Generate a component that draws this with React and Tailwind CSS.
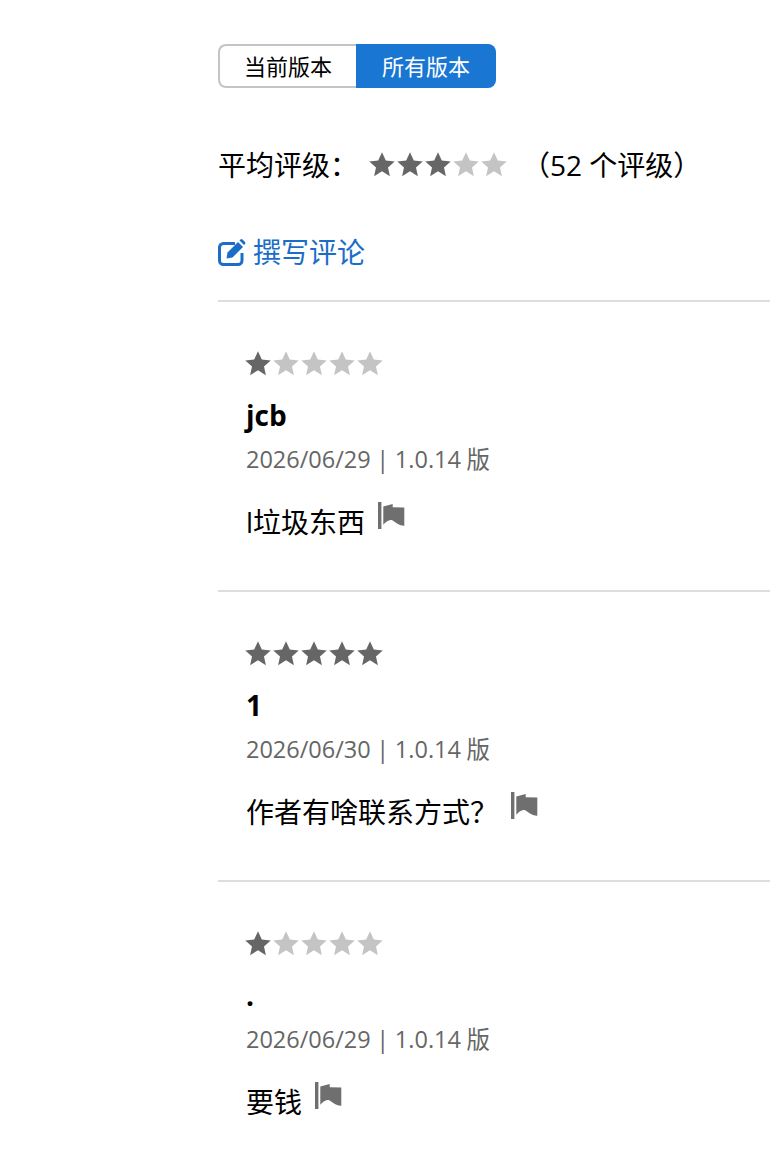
const FONT = "font-['Open_Sans','Noto_Sans_CJK_SC',sans-serif]";

function Star({ filled, size = 28 }) {
  return (
    <svg viewBox="0 0 28 28" width={size} height={size} className="block shrink-0">
      <path
        d="M14 1.200l3.800 8.200 8.900 1-6.700 6 1.900 8.800L14 20.300l-7.900 4.900 1.900-8.800-6.700-6 8.900-1z"
        fill={filled ? "#666666" : "#c4c4c4"}
      />
    </svg>
  );
}

function Stars({ n, className = "" }) {
  return (
    <div className={`flex ${className}`}>
      {[0, 1, 2, 3, 4].map((i) => (
        <Star key={i} filled={i < n} />
      ))}
    </div>
  );
}

function Flag({ className }) {
  return (
    <svg viewBox="0 0 28 28" width="28" height="28" className={className}>
      <path d="M0 0h3.400v27H0z" fill="#6f6f6f" />
      <path d="M5.300 4.500 14.700 2v3.300l11.600.3v18.100c-4.300.3-8.300-2.700-11.600-5.200-3.700-1.500-6.700 1.500-9.400 4.200z" fill="#6f6f6f" />
    </svg>
  );
}

function Review({ stars, name, date, version, text, flagClass }) {
  return (
    <div className="h-[290px] border-t-2 border-[#dddddd] pl-7 pt-[48px]">
      <Stars n={stars} className="-ml-[2px]" />
      <div className="mt-[18px] h-[38px] text-[28px] leading-[38px] font-bold text-black">{name}</div>
      <div className="mt-[9px] h-[32px] text-[23.5px] leading-[32px] text-[#666666] [word-spacing:-0.5px]">
        {date} | {version} 版
      </div>
      <div className="mt-[28px] flex h-[38px] items-center text-[28px] leading-[38px] text-black">
        <span>{text}</span>
        <Flag className={flagClass} />
      </div>
    </div>
  );
}

export default function App() {
  return (
    <div className={`h-[1160px] w-[770px] overflow-hidden bg-white pl-[218px] pt-[44px] ${FONT}`}>
      <div className="flex h-[44px] w-[278px] text-[22px]">
        <div className="flex w-[138px] items-center justify-center rounded-l-lg border-2 border-r-0 border-[#c4c4c4] bg-white text-black">
          当前版本
        </div>
        <div className="flex w-[140px] items-center justify-center rounded-r-lg bg-[#1976d2] text-white">
          所有版本
        </div>
      </div>

      <div className="mt-[58px] flex h-[38px] items-center text-[28px] leading-[38px] text-black">
        <span className="w-[150px]">平均评级：</span>
        <Stars n={3} />
        <span className="ml-[14px]">（52 个评级）</span>
      </div>

      <div className="mt-[49px] flex h-[38px] items-center text-[28px] leading-[38px] text-[#1a6ec8]">
        <svg viewBox="0 0 28 28" width="28" height="28" className="mr-[7px] shrink-0">
          <path d="M24 15v7.500a4 4 0 0 1-4 4H5.500a4 4 0 0 1-4-4V9.500a4 4 0 0 1 4-4H17" fill="none" stroke="#1a6ec8" strokeWidth="3" />
          <path d="M9.500 14.500 20 4l5 5-10.500 10.500-6 1z" fill="#1a6ec8" />
          <path d="M21.500 2.500l1-1q1-1 2 0l2.500 2.500q1 1 0 2l-1 1z" fill="#1a6ec8" />
        </svg>
        撰写评论
      </div>

      <div className="mt-[29px]">
        <Review stars={1} name="jcb" date="2026/06/29" version="1.0.14" text="l垃圾东西" flagClass="ml-[13px] -mt-[12px]" />
        <Review stars={5} name="1" date="2026/06/30" version="1.0.14" text="作者有啥联系方式？" flagClass="ml-[13px] -mt-[12px]" />
        <Review stars={1} name="." date="2026/06/29" version="1.0.14" text="要钱" flagClass="ml-[13px] -mt-[12px]" />
      </div>
    </div>
  );
}
